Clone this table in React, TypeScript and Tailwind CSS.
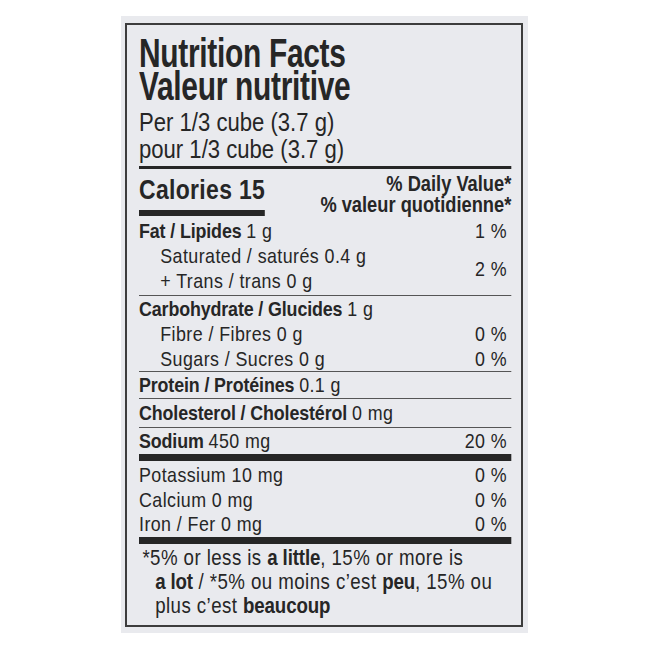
// The label face is a condensed grotesque; no condensed font is installed,
// so the content column is laid out wide and squeezed with scale-x.

type RowProps = {
  label?: string;
  amount: string;
  dv?: string;
  indent?: boolean;
};

const Row = ({ label, amount, dv, indent }: RowProps) => (
  <div className={`flex justify-between ${indent ? "pl-[25px]" : ""}`}>
    <span>
      {label && (
        <span className="font-bold tracking-[-0.15px]">{label} </span>
      )}
      {amount}
    </span>
    {dv && <span className="pr-[5px]">{dv}</span>}
  </div>
);

export default function App() {
  return (
    <div className="w-[650px] h-[650px] bg-white pt-[16px] pl-[121px] font-['Liberation_Sans',Arial,sans-serif] text-[#262626]">
      <div className="w-[407px] h-[617px] bg-[#e9eaee] pt-[7px] pl-[4px]">
        <div className="w-[398px] h-[604px] border-2 border-[#3d3d3d] pl-[12px] pt-[12px]">
          <div className="w-[438px] scale-x-[0.85] origin-left whitespace-nowrap">
            <h1 className="text-[40px] leading-[33px] font-bold tracking-[-0.4px] scale-x-[0.88] origin-left">
              Nutrition Facts
              <br />
              Valeur nutritive
            </h1>
            <p className="mt-[6px] text-[26px] leading-[27px]">
              Per 1/3 cube (3.7 g)
              <br />
              pour 1/3 cube (3.7 g)
            </p>
            <div className="mt-[3px] h-[3px] bg-[#262626]" />

            <div className="flex justify-between items-start">
              <div className="pt-[8px]">
                <div className="text-[27px] leading-[26px] font-bold tracking-[0.4px]">
                  Calories 15
                </div>
                <div className="mt-[7px] h-[6px] bg-[#262626]" />
              </div>
              <div className="pt-[5px] text-right text-[21.5px] leading-[21px] font-bold">
                % Daily Value*
                <br />% valeur quotidienne*
              </div>
            </div>

            <div className="text-[21px] leading-[25px] tracking-[0.5px]">
              <div className="pt-[2px] pb-[2px] border-b border-[#555]">
                <Row label="Fat / Lipides" amount="1 g" dv="1 %" />
                <div className="flex justify-between items-center">
                  <div className="pl-[25px]">
                    <div>Saturated / saturés 0.4 g</div>
                    <div>+ Trans / trans 0 g</div>
                  </div>
                  <span className="pr-[5px]">2 %</span>
                </div>
              </div>
              <div className="border-b border-[#555]">
                <Row label="Carbohydrate / Glucides" amount="1 g" />
                <Row indent amount="Fibre / Fibres 0 g" dv="0 %" />
                <Row indent amount="Sugars / Sucres 0 g" dv="0 %" />
              </div>
              <div className="pb-[1px] border-b border-[#555]">
                <Row label="Protein / Protéines" amount="0.1 g" />
              </div>
              <div className="pt-[1px] pb-[2px] border-b border-[#555]">
                <Row label="Cholesterol / Cholestérol" amount="0 mg" />
              </div>
              <div className="pb-[1px]">
                <Row label="Sodium" amount="450 mg" dv="20 %" />
              </div>
              <div className="h-[7px] bg-[#262626]" />
              <div className="pt-[2px] leading-[24.5px]">
                <Row amount="Potassium 10 mg" dv="0 %" />
                <Row amount="Calcium 0 mg" dv="0 %" />
                <Row amount="Iron / Fer 0 mg" dv="0 %" />
              </div>
              <div className="h-[7px] bg-[#262626]" />
              <p className="pt-[2px] pl-[19px] -indent-[15px] text-[22px] leading-[24px]">
                *5% or less is{" "}
                <span className="font-bold tracking-[-0.15px]">a little</span>,
                15% or more is
                <br />
                <span className="font-bold tracking-[-0.15px]">a lot</span> /
                *5% ou moins c’est{" "}
                <span className="font-bold tracking-[-0.15px]">peu</span>, 15%
                ou
                <br />
                plus c’est{" "}
                <span className="font-bold tracking-[-0.15px]">beaucoup</span>
              </p>
            </div>
          </div>
        </div>
      </div>
    </div>
  );
}
